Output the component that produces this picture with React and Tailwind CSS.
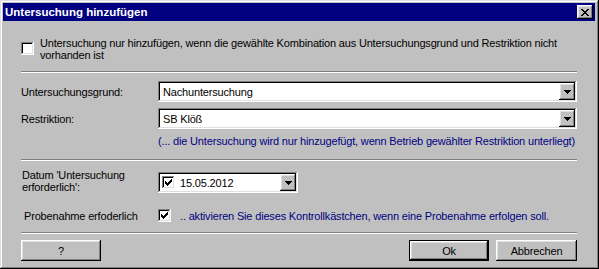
import React from "react";

const CHECK = ["......X", ".....XX", "X...XXX", "XX.XXX.", "XXXXX..", ".XXX...", "..X...."];
const CLOSE = ["XX....XX", ".XX..XX.", "..XXXX..", "...XX...", "..XXXX..", ".XX..XX.", "XX....XX"];
const ARROW = ["XXXXXXX", ".XXXXX.", "..XXX..", "...X..."];

function Pix({ rows }) {
  const h = rows.length;
  const w = rows[0].length;
  return (
    <svg width={w} height={h} viewBox={`0 0 ${w} ${h}`} shapeRendering="crispEdges" className="block">
      {rows.flatMap((r, y) =>
        [...r].map((c, x) =>
          c === "X" ? <rect key={x + "-" + y} x={x} y={y} width="1" height="1" fill="#000000" /> : null
        )
      )}
    </svg>
  );
}

const sunken =
  "shadow-[inset_-1px_-1px_0_#ffffff,inset_1px_1px_0_#808080,inset_-2px_-2px_0_#dfdfdf,inset_2px_2px_0_#000000]";
const raised =
  "shadow-[inset_-1px_-1px_0_#000000,inset_1px_1px_0_#ffffff,inset_-2px_-2px_0_#808080,inset_2px_2px_0_#dfdfdf]";
const raisedDefault =
  "shadow-[inset_-2px_-2px_0_#000000,inset_1px_1px_0_#000000,inset_2px_2px_0_#ffffff,inset_-3px_-3px_0_#808080,inset_3px_3px_0_#dfdfdf]";

function Checkbox({ checked, className = "" }) {
  return (
    <div className={`w-[13px] h-[13px] bg-white shrink-0 flex items-center justify-center ${sunken} ${className}`}>
      {checked ? <Pix rows={CHECK} /> : null}
    </div>
  );
}

function DropButton() {
  return (
    <div className={`w-[16px] h-[17px] bg-[#c0c0c0] shrink-0 flex items-center justify-center ${raised}`}>
      <Pix rows={ARROW} />
    </div>
  );
}

function Combo({ value }) {
  return (
    <div className={`flex-1 h-[21px] bg-white p-[2px] flex items-center ${sunken}`}>
      <span className="flex-1 pl-[3px] whitespace-nowrap">{value}</span>
      <DropButton />
    </div>
  );
}

function Separator({ className = "" }) {
  return <div className={`h-[2px] border-t border-t-[#808080] border-b border-b-white ${className}`} />;
}

function Button({ children, isDefault }) {
  return (
    <div
      className={`h-[21px] bg-[#c0c0c0] flex items-center justify-center ${isDefault ? raisedDefault : raised}`}
    >
      {children}
    </div>
  );
}

export default function App() {
  return (
    <div
      className={`w-[599px] h-[269px] bg-[#c0c0c0] pt-[3px] pl-[3px] pr-[4px] pb-[3px] flex flex-col overflow-hidden font-['Liberation_Sans',Arial,sans-serif] text-[11px] leading-[12px] text-black shadow-[inset_-1px_-1px_0_#000000,inset_1px_1px_0_#dfdfdf,inset_-2px_-2px_0_#808080,inset_2px_2px_0_#ffffff]`}
    >
      <div className="h-[18px] bg-[#000080] flex items-center justify-between pl-[2px] pr-[2px] shrink-0">
        <span className="text-white font-bold text-[11.5px] leading-[18px] whitespace-nowrap">
          Untersuchung hinzufügen
        </span>
        <div className={`w-[16px] h-[14px] bg-[#c0c0c0] flex items-center justify-center ${raised}`}>
          <Pix rows={CLOSE} />
        </div>
      </div>

      <div className="flex flex-col px-[18px] pt-[16px] tracking-[-0.17px]">
        <div className="flex items-start gap-[6px] h-[24px]">
          <Checkbox className="mt-[5px]" />
          <p className="whitespace-nowrap">
            Untersuchung nur hinzufügen, wenn die gewählte Kombination aus Untersuchungsgrund und Restriktion nicht
            <br />
            vorhanden ist
          </p>
        </div>

        <Separator className="mt-[10px]" />

        <div className="flex items-center h-[21px] mt-[8px]">
          <span className="w-[137px] shrink-0 whitespace-nowrap">Untersuchungsgrund:</span>
          <Combo value="Nachuntersuchung" />
        </div>
        <div className="flex items-center h-[21px] mt-[6px]">
          <span className="w-[137px] shrink-0 whitespace-nowrap">Restriktion:</span>
          <Combo value="SB Klöß" />
        </div>
        <p className="mt-[6px] ml-[137px] text-[#000080] whitespace-nowrap">
          (... die Untersuchung wird nur hinzugefügt, wenn Betrieb gewählter Restriktion unterliegt)
        </p>

        <Separator className="mt-[12px]" />

        <div className="flex items-start mt-[8px]">
          <p className="w-[137px] shrink-0 pl-[1px]">
            Datum 'Untersuchung
            <br />
            erforderlich':
          </p>
          <div className={`mt-[3px] w-[140px] h-[21px] bg-white p-[2px] flex items-center ${sunken}`}>
            <Checkbox checked className="ml-[2px]" />
            <span className="flex-1 ml-[5px] whitespace-nowrap">15.05.2012</span>
            <DropButton />
          </div>
        </div>

        <div className="flex items-center h-[13px] mt-[16px]">
          <span className="w-[137px] shrink-0 pl-[3px] whitespace-nowrap">Probenahme erfoderlich</span>
          <Checkbox checked />
          <span className="ml-[9px] text-[#000080] whitespace-nowrap">
            .. aktivieren Sie dieses Kontrollkästchen, wenn eine Probenahme erfolgen soll.
          </span>
        </div>

        <Separator className="mt-[10px]" />

        <div className="flex justify-between mt-[6px]">
          <div className="w-[80px]">
            <Button>?</Button>
          </div>
          <div className="flex gap-[7px]">
            <div className="w-[80px]">
              <Button isDefault>Ok</Button>
            </div>
            <div className="w-[81px]">
              <Button>Abbrechen</Button>
            </div>
          </div>
        </div>
      </div>
    </div>
  );
}
